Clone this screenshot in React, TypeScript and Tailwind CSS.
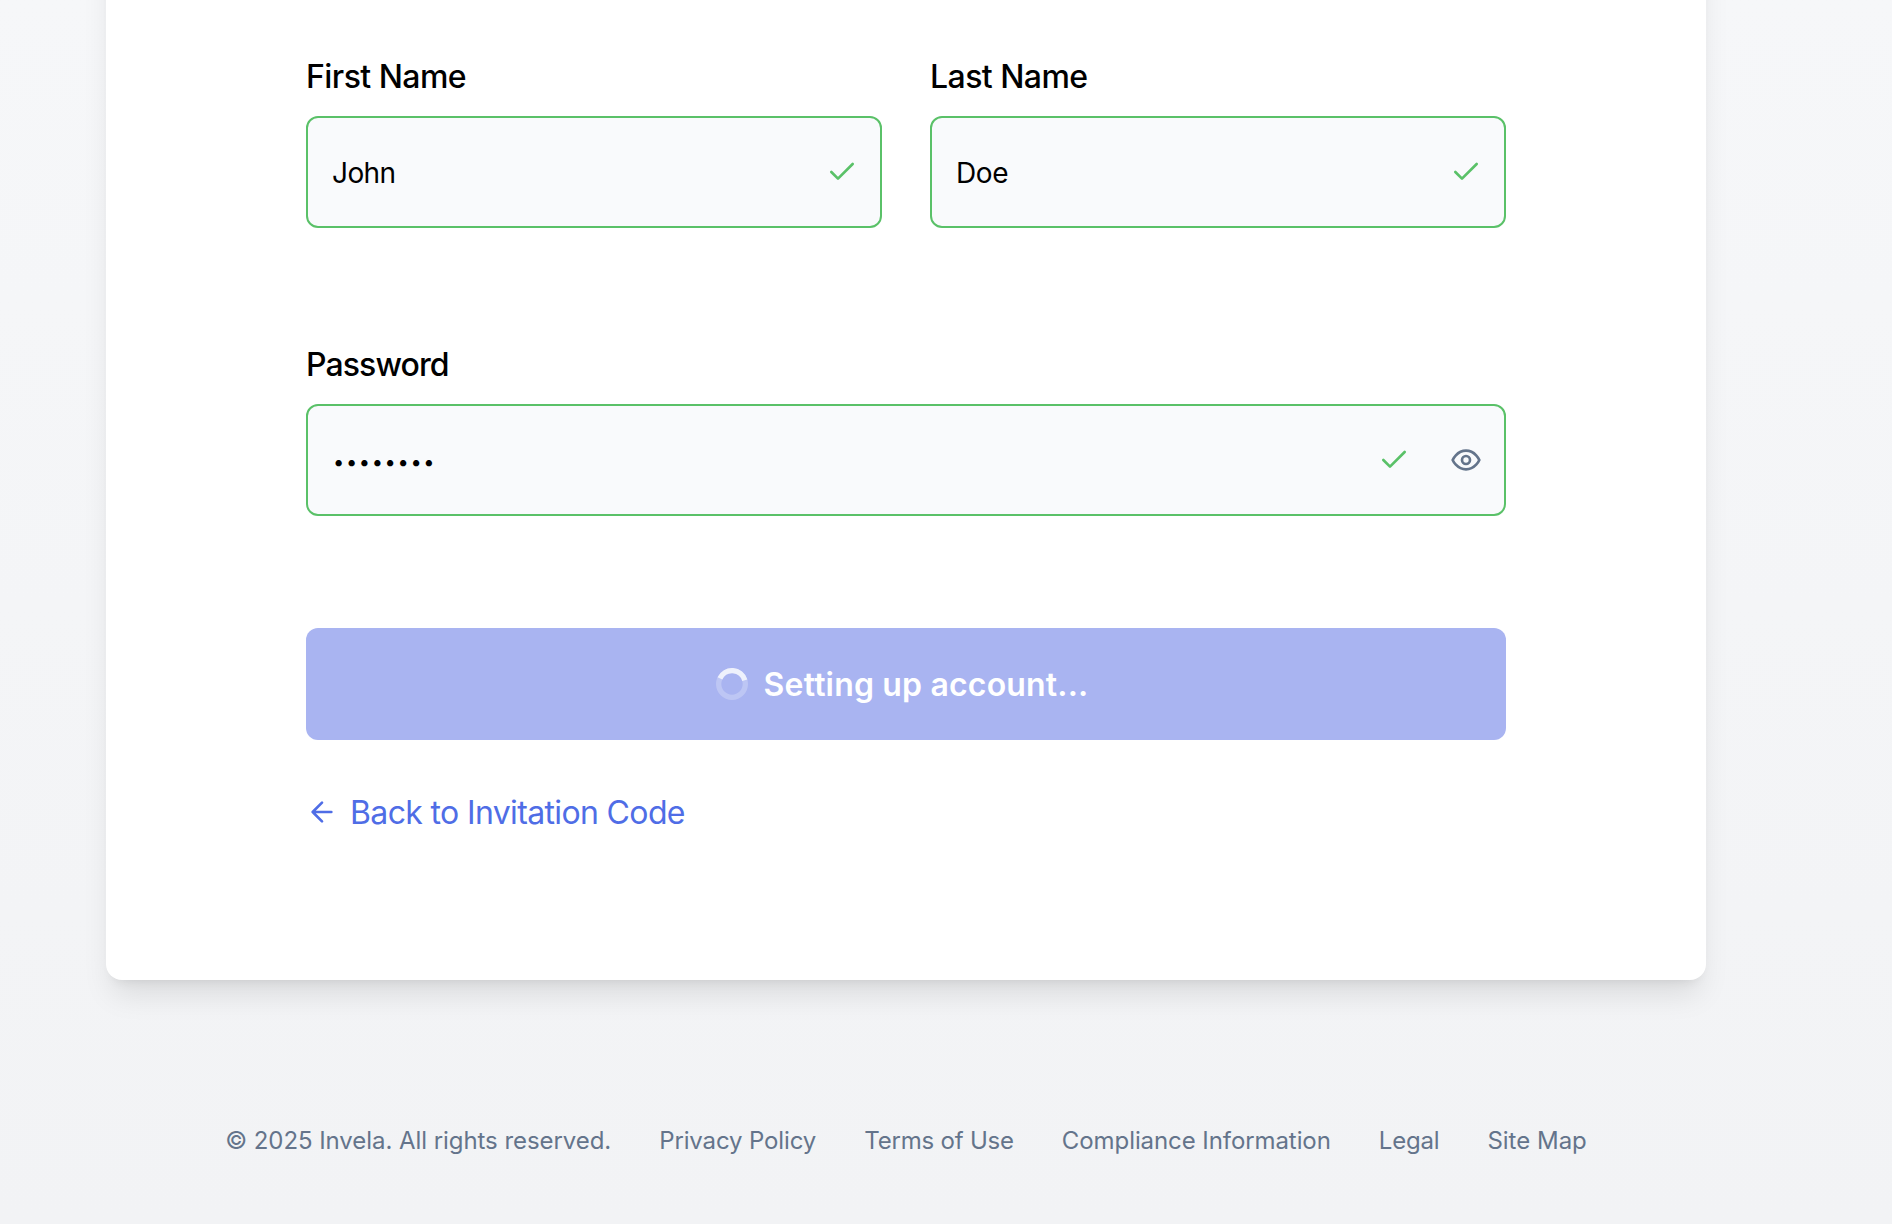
import type { ReactNode } from 'react';

const footerLinks = [
  { label: 'Privacy Policy', tracking: 'tracking-[-0.13px]' },
  { label: 'Terms of Use', tracking: 'tracking-[-0.2px]' },
  { label: 'Compliance Information', tracking: 'tracking-[-0.08px]' },
  { label: 'Legal', tracking: 'tracking-[-0.2px]' },
  { label: 'Site Map', tracking: 'tracking-[0px]' },
];

function Check() {
  return (
    <svg className="size-8 text-[#5ac168]" viewBox="0 0 24 24" fill="none" stroke="currentColor" strokeWidth="2" strokeLinecap="round" strokeLinejoin="round">
      <path d="M20 6 9 17l-5-5" />
    </svg>
  );
}

function Eye() {
  return (
    <svg className="size-8 text-[#64748b]" viewBox="0 0 24 24" fill="none" stroke="currentColor" strokeWidth="2" strokeLinecap="round" strokeLinejoin="round">
      <path d="M2 12s3-7 10-7 10 7 10 7-3 7-10 7-10-7-10-7Z" />
      <circle cx="12" cy="12" r="3" />
    </svg>
  );
}

function Spinner() {
  return (
    <svg className="size-8" viewBox="0 0 24 24" fill="none" stroke="white" strokeWidth="4">
      <circle cx="12" cy="12" r="10" strokeOpacity="0.24" />
      <path d="M2.94 7.77A10 10 0 0 1 21.6 9.2" strokeOpacity="0.75" />
    </svg>
  );
}

function Field({ label, tracking, children }: { label: string; tracking: string; children: ReactNode }) {
  return (
    <div className="flex-1">
      <div className={`h-8 pt-px text-[32px] leading-8 font-medium whitespace-nowrap ${tracking}`}>{label}</div>
      <div className="mt-6 flex h-28 items-center justify-between rounded-xl border-2 border-[#5ac168] bg-[#f9fafc] pr-[22px] pl-6 text-[28px]">
        {children}
      </div>
    </div>
  );
}

export default function App() {
  return (
    <div className="h-[1224px] w-[1892px] overflow-hidden bg-gradient-to-b from-[#f6f7f9] to-[#f2f3f5] pl-[106px] font-['Inter',sans-serif] text-black">
      <main className="-mt-[100px] h-[1080px] w-[1600px] rounded-b-2xl bg-white px-[200px] pt-[160px] shadow-[0_20px_30px_-6px_rgba(0,0,0,0.1),0_8px_12px_-8px_rgba(0,0,0,0.1)]">
        <div className="flex gap-12">
          <Field label="First Name" tracking="tracking-[-0.55px]"><span className="pt-0.5 tracking-[-0.6px]">John</span><Check /></Field>
          <Field label="Last Name" tracking="tracking-[-0.55px]"><span className="pt-0.5 tracking-[-0.4px]">Doe</span><Check /></Field>
        </div>
        <div className="mt-[120px] flex">
          <Field label="Password" tracking="tracking-[-0.9px]">
            <span className="pt-1 pl-px text-[20px] tracking-[1.65px]">••••••••</span>
            <span className="flex gap-10"><Check /><Eye /></span>
          </Field>
        </div>
        <button className="mt-28 flex h-28 w-full items-center justify-center gap-4 rounded-xl bg-[#a9b4f1] pr-2 text-[32px] font-semibold text-white">
          <Spinner />
          <span className="pt-0.5 tracking-[0.17px]">Setting up account...</span>
        </button>
        <a className="mt-12 flex h-12 items-center gap-3 text-[32px] text-[#4f6de6]">
          <svg className="size-8" viewBox="0 0 24 24" fill="none" stroke="currentColor" strokeWidth="2" strokeLinecap="round" strokeLinejoin="round"><path d="m12 19-7-7 7-7M19 12H5" /></svg>
          <span className="pt-0.5 tracking-[-0.64px]">Back to Invitation Code</span>
        </a>
      </main>
      <footer className="mt-[145px] flex w-[1600px] justify-center gap-12 text-2xl whitespace-nowrap text-[#64748b]">
        <span className="tracking-[-0.06px]">© 2025 Invela. All rights reserved.</span>
        {footerLinks.map((l) => <a key={l.label} className={l.tracking}>{l.label}</a>)}
      </footer>
    </div>
  );
}
